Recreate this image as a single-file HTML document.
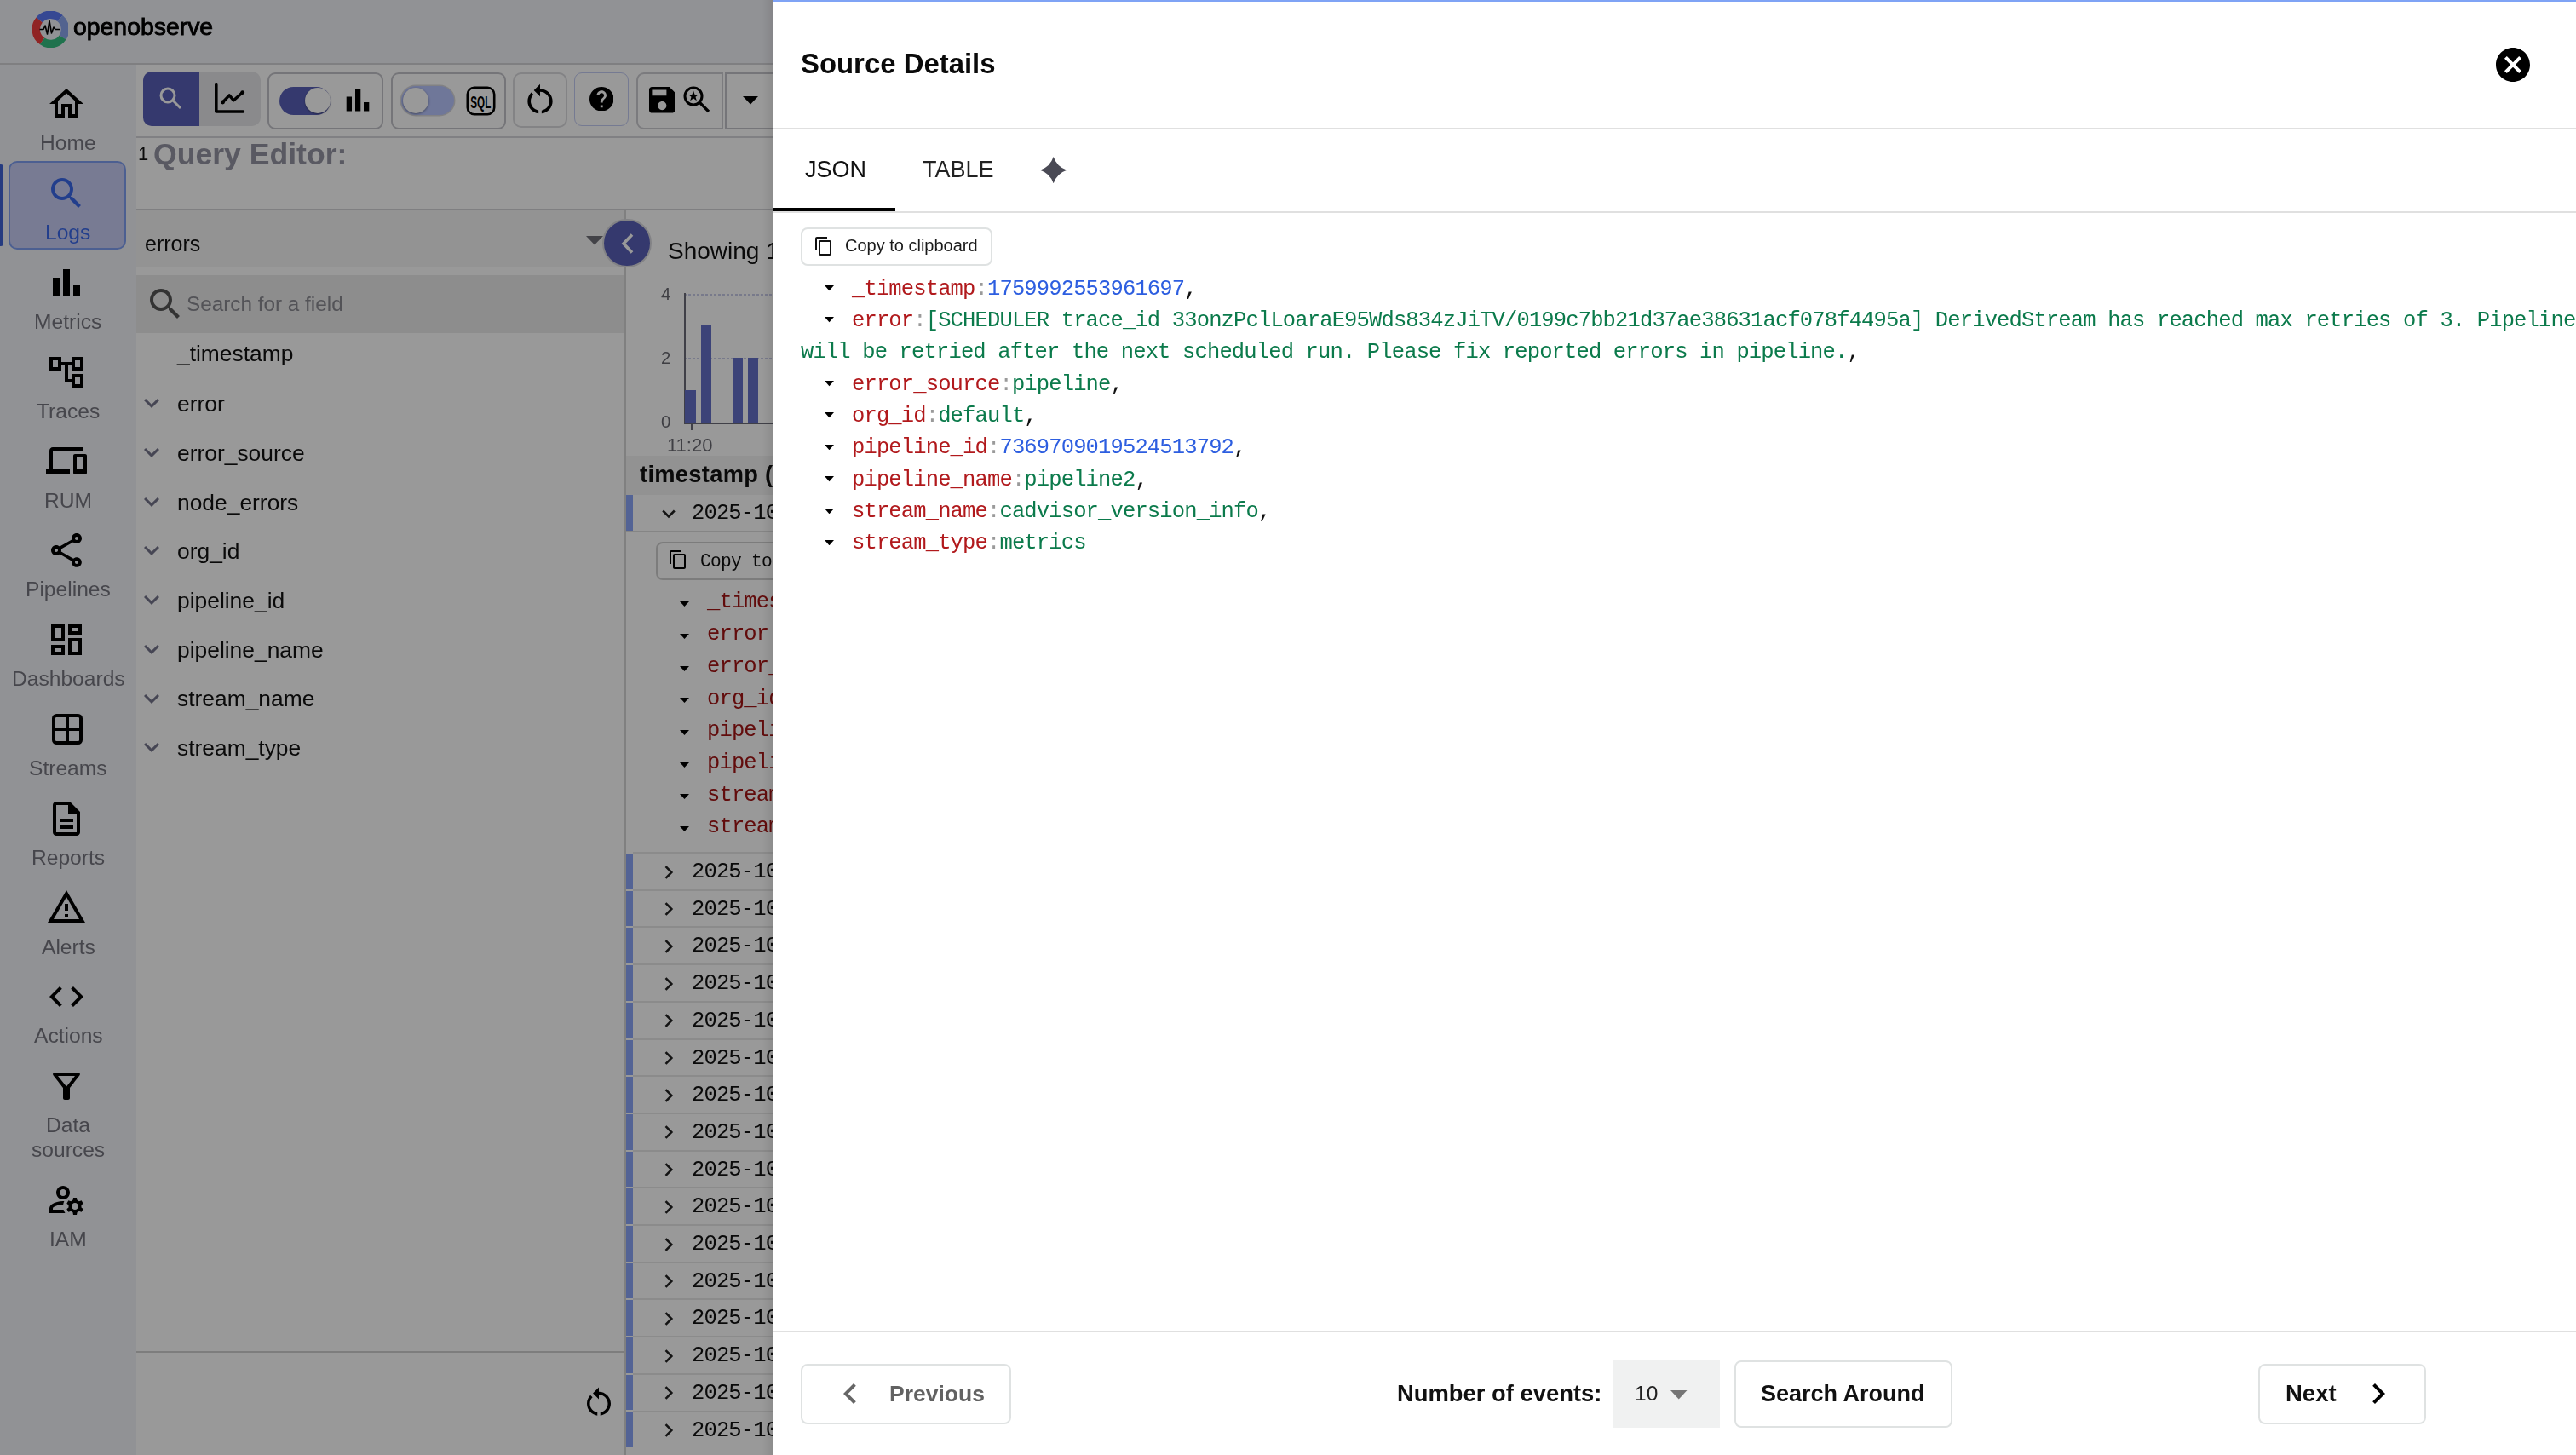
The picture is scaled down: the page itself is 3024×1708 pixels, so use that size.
<!DOCTYPE html>
<html><head><meta charset="utf-8"><title>Source Details</title>
<style>
html,body{margin:0;padding:0;}
body{width:3024px;height:1708px;overflow:hidden;position:relative;background:#fff;font-family:"Liberation Sans", sans-serif;}
.r{position:absolute;display:block;}
.t{position:absolute;white-space:pre;line-height:1;will-change:transform;}
.s{font-family:"Liberation Sans", sans-serif;}
.m{font-family:"Liberation Mono", monospace;}
</style></head><body>
<div class="r" style="left:0.0px;top:0.0px;width:907.0px;height:74.0px;background:#f2f3f8"></div>
<div class="r" style="left:0.0px;top:74.0px;width:907.0px;height:2.0px;background:#d4d4d8"></div>
<svg class="r" style="left:37px;top:12.5px" width="43" height="43" viewBox="0 0 43 43">
<g fill="none" stroke-width="9.5">
<path d="M 9.2 10.5 A 16.75 16.75 0 0 1 33.5 8.6" stroke="#5a78f5"/>
<path d="M 33.5 8.6 A 16.75 16.75 0 0 1 36.5 31" stroke="#8aa6ee"/>
<path d="M 36.5 31 A 16.75 16.75 0 0 1 12.5 35.2" stroke="#34bf80"/>
<path d="M 12.5 35.2 A 16.75 16.75 0 0 1 9.2 10.5" stroke="#f03c3c"/>
</g>
<polyline points="9.5,21.5 14,21.5 16,17 18.5,27 21,11.5 23.5,26 26,19 28,21.5 33.5,21.5" fill="none" stroke="#000" stroke-width="1.6" stroke-linejoin="round"/>
</svg>
<div class="t s" style="left:86.0px;top:16.7px;font-size:28.4px;color:#000;font-weight:400;-webkit-text-stroke:0.9px #000">openobserve</div>
<div class="r" style="left:0.0px;top:76.0px;width:160.0px;height:1632.0px;background:#f2f3f8"></div>
<div class="r" style="left:0.0px;top:193.0px;width:4.0px;height:96.0px;background:#3f63d6;border-radius:0 3px 3px 0"></div>
<div class="r" style="left:10.0px;top:189.0px;width:138.0px;height:104.0px;background:#c9cdf5;border:2px solid #7f9ff2;border-radius:10px;box-sizing:border-box"></div>
<svg class="r" style="left:54.3px;top:98.2px;" width="48" height="48" viewBox="0 0 24 24"><path fill="#000" d="M12 5.69l5 4.5V18h-2v-6H9v6H7v-7.81l5-4.5M12 3L2 12h3v8h6v-6h2v6h6v-8h3L12 3z"/></svg>
<div class="t s" style="left:47.2px;top:156.4px;font-size:24.6px;color:#76767f;font-weight:400;">Home</div>
<svg class="r" style="left:54.3px;top:203.0px;" width="48" height="48" viewBox="0 0 24 24"><path fill="#3a68ea" d="M15.5 14h-.79l-.28-.27C15.41 12.59 16 11.11 16 9.5 16 5.91 13.09 3 9.5 3S3 5.91 3 9.5 5.91 16 9.5 16c1.61 0 3.09-.59 4.23-1.57l.27.28v.79l5 4.99L20.49 19l-4.99-5zm-6 0C7.01 14 5 11.99 5 9.5S7.01 5 9.5 5 14 7.01 14 9.5 11.99 14 9.5 14z"/></svg>
<div class="t s" style="left:53.3px;top:261.2px;font-size:24.6px;color:#3a68ea;font-weight:400;">Logs</div>
<svg class="r" style="left:54.3px;top:307.8px;" width="48" height="48" viewBox="0 0 24 24"><path fill="#000" d="M4 9h4v11H4zm12 4h4v7h-4zm-6-9h4v16h-4z"/></svg>
<div class="t s" style="left:40.4px;top:366.0px;font-size:24.6px;color:#76767f;font-weight:400;">Metrics</div>
<svg class="r" style="left:54.3px;top:412.6px;" width="48" height="48" viewBox="0 0 24 24"><path fill="#000" d="M22 11V3h-7v3H9V3H2v8h7V8h2v10h4v3h7v-8h-7v3h-2V8h2v3h7zM7 9H4V5h3v4zm10 6h3v4h-3v-4zm0-10h3v4h-3V5z"/></svg>
<div class="t s" style="left:42.9px;top:470.8px;font-size:24.6px;color:#76767f;font-weight:400;">Traces</div>
<svg class="r" style="left:54.3px;top:517.4px;" width="48" height="48" viewBox="0 0 24 24"><path fill="#000" d="M4 6h18V4H4c-1.1 0-2 .9-2 2v11H0v3h14v-3H4V6zm19 2h-6c-.55 0-1 .45-1 1v10c0 .55.45 1 1 1h6c.55 0 1-.45 1-1V9c0-.55-.45-1-1-1zm-1 9h-4v-7h4v7z"/></svg>
<div class="t s" style="left:52.0px;top:575.6px;font-size:24.6px;color:#76767f;font-weight:400;">RUM</div>
<svg class="r" style="left:54.3px;top:622.2px;" width="48" height="48" viewBox="0 0 24 24"><path fill="#000" d="M18 16.08c-.76 0-1.44.3-1.96.77L8.91 12.7c.05-.23.09-.46.09-.7s-.04-.47-.09-.7l7.05-4.11c.54.5 1.25.81 2.04.81 1.66 0 3-1.34 3-3s-1.340-3-3-3-3 1.34-3 3c0 .24.04.47.09.7L8.04 9.81C7.5 9.31 6.79 9 6 9c-1.66 0-3 1.34-3 3s1.34 3 3 3c.79 0 1.5-.31 2.04-.81l7.12 4.16c-.05.21-.08.43-.08.65 0 1.61 1.31 2.92 2.92 2.92s2.92-1.31 2.92-2.92c0-1.61-1.31-2.92-2.92-2.92zM18 4c.55 0 1 .45 1 1s-.45 1-1 1-1-.45-1-1 .45-1 1-1zM6 13c-.55 0-1-.45-1-1s.45-1 1-1 1 .45 1 1-.45 1-1 1zm12 7.02c-.55 0-1-.45-1-1s.45-1 1-1 1 .45 1 1-.45 1-1 1z"/></svg>
<div class="t s" style="left:30.1px;top:680.4px;font-size:24.6px;color:#76767f;font-weight:400;">Pipelines</div>
<svg class="r" style="left:54.3px;top:727.0px;" width="48" height="48" viewBox="0 0 24 24"><path fill="#000" d="M19 5v2h-4V5h4M9 5v6H5V5h4m10 8v6h-4v-6h4M9 17v2H5v-2h4M21 3h-8v6h8V3zM11 3H3v10h8V3zm10 8h-8v10h8V11zm-10 4H3v6h8v-6z"/></svg>
<div class="t s" style="left:13.7px;top:785.2px;font-size:24.6px;color:#76767f;font-weight:400;">Dashboards</div>
<svg class="r" style="left:54.5px;top:831.8px;" width="48" height="48" viewBox="0 0 24 24"><rect x="4" y="4" width="16" height="16" rx="1.6" fill="none" stroke="#000" stroke-width="2"/><path d="M12 4v16M4 12h16" stroke="#000" stroke-width="2"/></svg>
<div class="t s" style="left:34.2px;top:890.0px;font-size:24.6px;color:#76767f;font-weight:400;">Streams</div>
<svg class="r" style="left:54.3px;top:936.6px;" width="48" height="48" viewBox="0 0 24 24"><path fill="#000" d="M8 16h8v2H8zm0-4h8v2H8zm6-10H6c-1.1 0-2 .9-2 2v16c0 1.1.89 2 1.99 2H18c1.1 0 2-.9 2-2V8l-6-6zm4 18H6V4h7v5h5v11z"/></svg>
<div class="t s" style="left:37.0px;top:994.8px;font-size:24.6px;color:#76767f;font-weight:400;">Reports</div>
<svg class="r" style="left:54.3px;top:1041.4px;" width="48" height="48" viewBox="0 0 24 24"><path fill="#000" d="M12 5.99L19.53 19H4.47L12 5.99M12 2L1 21h22L12 2zm1 14h-2v2h2v-2zm0-6h-2v4h2v-4z"/></svg>
<div class="t s" style="left:48.6px;top:1099.6px;font-size:24.6px;color:#76767f;font-weight:400;">Alerts</div>
<svg class="r" style="left:54.3px;top:1146.2px;" width="48" height="48" viewBox="0 0 24 24"><path fill="#000" d="M9.4 16.6L4.8 12l4.6-4.6L8 6l-6 6 6 6 1.4-1.4zm5.2 0l4.6-4.6-4.6-4.6L16 6l6 6-6 6-1.4-1.4z"/></svg>
<div class="t s" style="left:39.7px;top:1204.4px;font-size:24.6px;color:#76767f;font-weight:400;">Actions</div>
<svg class="r" style="left:54.3px;top:1251.0px;" width="48" height="48" viewBox="0 0 24 24"><path fill="#000" d="M7 6h10l-5.01 6.3L7 6zm-2.75-.39C6.27 8.2 10 13 10 13v6c0 .55.45 1 1 1h2c.55 0 1-.45 1-1v-6s3.72-4.8 5.74-7.39c.51-.66.04-1.61-.79-1.61H5.04c-.83 0-1.3.95-.79 1.61z"/></svg>
<div class="t s" style="left:54.0px;top:1309.2px;font-size:24.6px;color:#76767f;font-weight:400;">Data</div>
<div class="t s" style="left:37.0px;top:1338.4px;font-size:24.6px;color:#76767f;font-weight:400;">sources</div>
<svg class="r" style="left:54.3px;top:1384.4px;" width="48" height="48" viewBox="0 0 24 24"><path fill="#000" d="M4 18v-.65c0-.34.16-.66.41-.81C6.1 15.53 8.03 15 10 15c.03 0 .05 0 .08.01.1-.7.3-1.37.59-1.98-.22-.02-.44-.03-.67-.03-2.42 0-4.68.67-6.61 1.82-.88.52-1.39 1.5-1.39 2.53V20h9.26c-.42-.6-.75-1.28-.97-2H4zM10 12c2.21 0 4-1.79 4-4s-1.79-4-4-4-4 1.79-4 4 1.79 4 4 4zm0-6c1.1 0 2 .9 2 2s-.9 2-2 2-2-.9-2-2 .9-2 2-2zM20.75 16c0-.22-.03-.42-.06-.63l1.14-1.01-1-1.73-1.45.49c-.32-.27-.68-.48-1.08-.63L18 11h-2l-.3 1.49c-.4.15-.76.36-1.08.63l-1.450-.49-1 1.73 1.14 1.01c-.03.21-.06.41-.06.63s.03.42.06.63l-1.14 1.01 1 1.73 1.45-.49c.32.27.68.48 1.08.63L16 21h2l.3-1.49c.4-.15.76-.36 1.08-.63l1.45.49 1-1.73-1.14-1.01c.03-.21.06-.41.06-.63zM17 18c-1.1 0-2-.9-2-2s.9-2 2-2 2 .9 2 2-.9 2-2 2z"/></svg>
<div class="t s" style="left:58.1px;top:1442.6px;font-size:24.6px;color:#76767f;font-weight:400;">IAM</div>
<div class="r" style="left:168.0px;top:84.0px;width:138.0px;height:64.0px;background:#e7e7e9;border-radius:10px"></div>
<div class="r" style="left:168.0px;top:84.0px;width:66.0px;height:64.0px;background:#5960b7;border-radius:10px 0 0 10px"></div>
<svg class="r" style="left:183.0px;top:99.0px;" width="32" height="32" viewBox="0 0 32 32"><circle cx="14" cy="13" r="8" fill="none" stroke="#fff" stroke-width="3"/><path d="M19.8 18.8L29 28" stroke="#fff" stroke-width="3" stroke-linecap="butt"/></svg>
<svg class="r" style="left:250.0px;top:97.0px;" width="38" height="38" viewBox="0 0 38 38"><path d="M3.8 2.5V34h31.6" fill="none" stroke="#000" stroke-width="3.6" stroke-linecap="round" stroke-linejoin="round"/><polyline points="11.5,23 19.2,14.9 24.3,20.8 34.7,11.6" fill="none" stroke="#000" stroke-width="3.4" stroke-linecap="round" stroke-linejoin="round"/><circle cx="11.5" cy="23" r="2.4"/><circle cx="34.7" cy="11.6" r="2.4"/></svg>
<div class="r" style="left:314.0px;top:84.5px;width:135.5px;height:67.0px;border:2px solid #c4c4ca;border-radius:9px;box-sizing:border-box"></div>
<div class="r" style="left:327.5px;top:101.5px;width:60.5px;height:33.2px;background:#5960b7;border-radius:17px"></div>
<div class="r" style="left:357.5px;top:102.5px;width:30.0px;height:30.0px;background:#fff;border-radius:50%;box-shadow:0 1px 2px rgba(0,0,0,.35)"></div>
<svg class="r" style="left:406.0px;top:104.0px;" width="28" height="28" viewBox="0 0 28 28"><rect x="0.7" y="9.5" width="6.3" height="17" fill="#000"/><rect x="11" y="0.5" width="6.3" height="26" fill="#000"/><rect x="21" y="16" width="6.3" height="10.5" fill="#000"/></svg>
<div class="r" style="left:458.5px;top:84.5px;width:135.0px;height:67.0px;border:2px solid #c4c4ca;border-radius:9px;box-sizing:border-box"></div>
<div class="r" style="left:471.0px;top:101.0px;width:62.0px;height:33.8px;background:#b9c6ff;border-radius:17px;box-shadow:0 0 0 1.5px #d8d8dc"></div>
<div class="r" style="left:472.5px;top:102.5px;width:30.0px;height:30.0px;background:#fff;border-radius:50%;box-shadow:0 1px 3px rgba(0,0,0,.4)"></div>
<svg class="r" style="left:546.5px;top:100.5px;" width="35" height="35" viewBox="0 0 35 35"><rect x="1.8" y="1.8" width="31.4" height="31.4" rx="8" fill="none" stroke="#000" stroke-width="2.6"/><text x="5.3" y="25.8" textLength="24" lengthAdjust="spacingAndGlyphs" font-family="Liberation Sans" font-weight="700" font-size="20.5" fill="#000">SQL</text></svg>
<div class="r" style="left:602.0px;top:84.5px;width:63.5px;height:65.5px;border:2px solid #dadade;border-radius:10px;box-sizing:border-box"></div>
<svg class="r" style="left:612.0px;top:94.5px;" width="44" height="44" viewBox="0 0 24 24"><path fill="#000" d="M12 5V2L8 6l4 4V7c3.31 0 6 2.69 6 6 0 2.97-2.17 5.43-5 5.91v2.02c3.95-.49 7-3.85 7-7.93 0-4.42-3.58-8-8-8zm-6 8c0-1.65.67-3.15 1.76-4.24L6.34 7.34C4.9 8.79 4 10.79 4 13c0 4.08 3.050 7.44 7 7.93v-2.02c-2.83-.48-5-2.94-5-5.91z"/></svg>
<div class="r" style="left:674.0px;top:84.5px;width:63.5px;height:63.0px;border:1.5px solid #c3cbf3;border-radius:9px;box-sizing:border-box"></div>
<svg class="r" style="left:691.8px;top:101.5px;" width="28.5" height="28.5" viewBox="2 2 20 20"><path fill="#000" d="M12 2C6.48 2 2 6.48 2 12s4.48 10 10 10 10-4.48 10-10S17.52 2 12 2zm1 17h-2v-2h2v2zm2.07-7.75l-.9.92C13.45 12.9 13 13.5 13 15h-2v-.5c0-1.1.45-2.1 1.17-2.83l1.24-1.26c.37-.36.59-.86.59-1.410 0-1.1-.9-2-2-2s-2 .9-2 2H8c0-2.21 1.79-4 4-4s4 1.79 4 4c0 .88-.36 1.68-.93 2.25z"/></svg>
<div class="r" style="left:746.5px;top:84.5px;width:102.0px;height:67.0px;border:2px solid #cdcdd2;border-radius:9px 0 0 9px;box-sizing:border-box"></div>
<svg class="r" style="left:761.6px;top:102.0px;" width="30.6" height="30.6" viewBox="3 3 18 18"><path fill="#000" d="M17 3H5c-1.11 0-2 .9-2 2v14c0 1.1.89 2 2 2h14c1.1 0 2-.9 2-2V7l-4-4zm-5 16c-1.66 0-3-1.34-3-3s1.34-3 3-3 3 1.34 3 3-1.34 3-3 3zm3-10H5V5h10v4z"/></svg>
<svg class="r" style="left:801.0px;top:100.0px;" width="34" height="34" viewBox="0 0 34 34"><circle cx="13" cy="13" r="10" fill="none" stroke="#000" stroke-width="3"/><path d="M20.5 20.5L31 31" stroke="#000" stroke-width="3.2"/><polygon points="13,6.6 14.6,11 19,11 15.5,13.8 16.8,18.2 13,15.5 9.2,18.2 10.5,13.8 7,11 11.4,11" fill="#000"/></svg>
<div class="r" style="left:851.0px;top:84.5px;width:59.0px;height:67.0px;border:2px solid #c4c4ca;border-right:none;box-sizing:border-box"></div>
<svg class="r" style="left:872.0px;top:113.0px;" width="18" height="10" viewBox="0 0 18 10"><polygon points="0,0 18,0 9,9.5" fill="#000"/></svg>
<div class="r" style="left:160.0px;top:160.0px;width:747.0px;height:2.0px;background:#d6d6da"></div>
<div class="t s" style="left:161.5px;top:170.4px;font-size:22px;color:#111;font-weight:400;">1</div>
<div class="t s" style="left:180.0px;top:163.9px;font-size:35.6px;color:#9494a3;font-weight:700;">Query Editor:</div>
<div class="r" style="left:160.0px;top:245.0px;width:747.0px;height:2.0px;background:#d4d4d8"></div>
<div class="r" style="left:160.0px;top:247.0px;width:574.0px;height:67.0px;background:#f5f5f5"></div>
<div class="t s" style="left:170.0px;top:274.3px;font-size:25px;color:#111;font-weight:400;">errors</div>
<svg class="r" style="left:688.0px;top:277.0px;" width="20" height="11" viewBox="0 0 20 11"><polygon points="0,0 20,0 10,10.5" fill="#707078"/></svg>
<div class="r" style="left:160.0px;top:323.0px;width:574.0px;height:68.0px;background:#ececec"></div>
<svg class="r" style="left:170.0px;top:333.0px;" width="48" height="48" viewBox="0 0 24 24"><path fill="#555" d="M15.5 14h-.79l-.28-.27C15.41 12.59 16 11.11 16 9.5 16 5.91 13.09 3 9.5 3S3 5.91 3 9.5 5.91 16 9.5 16c1.61 0 3.09-.59 4.23-1.57l.27.28v.79l5 4.99L20.49 19l-4.99-5zm-6 0C7.01 14 5 11.99 5 9.5S7.01 5 9.5 5 14 7.01 14 9.5 11.99 14 9.5 14z"/></svg>
<div class="t s" style="left:218.5px;top:344.8px;font-size:24.3px;color:#8a8a92;font-weight:400;">Search for a field</div>
<div class="t s" style="left:208.3px;top:402.2px;font-size:26.4px;color:#111;font-weight:400;">_timestamp</div>
<svg class="r" style="left:160.0px;top:455.3px;" width="36" height="36" viewBox="0 0 24 24"><path fill="#76768c" d="M16.59 8.59L12 13.17 7.41 8.59 6 10l6 6 6-6z"/></svg>
<div class="t s" style="left:208.3px;top:461.2px;font-size:26.4px;color:#111;font-weight:400;">error</div>
<svg class="r" style="left:160.0px;top:513.0px;" width="36" height="36" viewBox="0 0 24 24"><path fill="#76768c" d="M16.59 8.59L12 13.17 7.41 8.59 6 10l6 6 6-6z"/></svg>
<div class="t s" style="left:208.3px;top:518.9px;font-size:26.4px;color:#111;font-weight:400;">error_source</div>
<svg class="r" style="left:160.0px;top:570.7px;" width="36" height="36" viewBox="0 0 24 24"><path fill="#76768c" d="M16.59 8.59L12 13.17 7.41 8.59 6 10l6 6 6-6z"/></svg>
<div class="t s" style="left:208.3px;top:576.6px;font-size:26.4px;color:#111;font-weight:400;">node_errors</div>
<svg class="r" style="left:160.0px;top:628.4px;" width="36" height="36" viewBox="0 0 24 24"><path fill="#76768c" d="M16.59 8.59L12 13.17 7.41 8.59 6 10l6 6 6-6z"/></svg>
<div class="t s" style="left:208.3px;top:634.3px;font-size:26.4px;color:#111;font-weight:400;">org_id</div>
<svg class="r" style="left:160.0px;top:686.1px;" width="36" height="36" viewBox="0 0 24 24"><path fill="#76768c" d="M16.59 8.59L12 13.17 7.41 8.59 6 10l6 6 6-6z"/></svg>
<div class="t s" style="left:208.3px;top:692.0px;font-size:26.4px;color:#111;font-weight:400;">pipeline_id</div>
<svg class="r" style="left:160.0px;top:743.8px;" width="36" height="36" viewBox="0 0 24 24"><path fill="#76768c" d="M16.59 8.59L12 13.17 7.41 8.59 6 10l6 6 6-6z"/></svg>
<div class="t s" style="left:208.3px;top:749.7px;font-size:26.4px;color:#111;font-weight:400;">pipeline_name</div>
<svg class="r" style="left:160.0px;top:801.5px;" width="36" height="36" viewBox="0 0 24 24"><path fill="#76768c" d="M16.59 8.59L12 13.17 7.41 8.59 6 10l6 6 6-6z"/></svg>
<div class="t s" style="left:208.3px;top:807.4px;font-size:26.4px;color:#111;font-weight:400;">stream_name</div>
<svg class="r" style="left:160.0px;top:859.2px;" width="36" height="36" viewBox="0 0 24 24"><path fill="#76768c" d="M16.59 8.59L12 13.17 7.41 8.59 6 10l6 6 6-6z"/></svg>
<div class="t s" style="left:208.3px;top:865.1px;font-size:26.4px;color:#111;font-weight:400;">stream_type</div>
<div class="r" style="left:733.3px;top:247.0px;width:1.5px;height:1461.0px;background:#d6d6d6"></div>
<div class="r" style="left:160.0px;top:1586.0px;width:573.0px;height:2.0px;background:#d0d0d0"></div>
<div class="r" style="left:707.0px;top:256.8px;width:57.6px;height:57.6px;background:#5960b7;border:2px solid #d9d9de;border-radius:50%;box-sizing:border-box"></div>
<svg class="r" style="left:726.0px;top:273.0px;" width="22" height="26" viewBox="0 0 22 26"><polyline points="16,2.5 6,13 16,23.5" fill="none" stroke="#fff" stroke-width="3.6"/></svg>
<svg class="r" style="left:681.5px;top:1624.5px;" width="42" height="42" viewBox="0 0 24 24"><path fill="#000" d="M12 5V2L8 6l4 4V7c3.31 0 6 2.69 6 6 0 2.97-2.17 5.43-5 5.91v2.02c3.95-.49 7-3.85 7-7.93 0-4.42-3.58-8-8-8zm-6 8c0-1.65.67-3.15 1.76-4.24L6.34 7.34C4.9 8.79 4 10.79 4 13c0 4.08 3.050 7.44 7 7.93v-2.02c-2.83-.48-5-2.94-5-5.91z"/></svg>
<div class="t s" style="left:783.5px;top:280.8px;font-size:28px;color:#111;font-weight:400;">Showing 1 to 50 out of 50</div>
<div class="t s" style="left:775.5px;top:334.8px;font-size:20.5px;color:#6a6a72;font-weight:400;">4</div>
<div class="t s" style="left:775.5px;top:410.0px;font-size:20.5px;color:#6a6a72;font-weight:400;">2</div>
<div class="t s" style="left:775.5px;top:484.8px;font-size:20.5px;color:#6a6a72;font-weight:400;">0</div>
<div class="r" style="left:803.0px;top:345.0px;width:104.0px;height:1.5px;background:repeating-linear-gradient(90deg,#c9cbe8 0 3px,transparent 3px 5px)"></div>
<div class="r" style="left:803.0px;top:419.5px;width:104.0px;height:1.5px;background:repeating-linear-gradient(90deg,#c9cbe8 0 3px,transparent 3px 5px)"></div>
<div class="r" style="left:802.5px;top:344.0px;width:2.0px;height:153.0px;background:#6c6c78"></div>
<div class="r" style="left:802.5px;top:495.5px;width:104.5px;height:2.0px;background:#6c6c78"></div>
<div class="r" style="left:811.0px;top:497.0px;width:2.0px;height:7.5px;background:#6c6c78"></div>
<div class="r" style="left:804.0px;top:457.5px;width:12.8px;height:38.5px;background:#6470c8"></div>
<div class="r" style="left:822.8px;top:382.3px;width:12.4px;height:113.7px;background:#6470c8"></div>
<div class="r" style="left:859.5px;top:420.0px;width:12.5px;height:76.0px;background:#6470c8"></div>
<div class="r" style="left:878.0px;top:420.0px;width:12.4px;height:76.0px;background:#6470c8"></div>
<div class="t s" style="left:783.0px;top:512.1px;font-size:22px;color:#6a6a72;font-weight:400;">11:20</div>
<div class="r" style="left:735.0px;top:535.0px;width:172.0px;height:46.0px;background:#f3f3f3"></div>
<div class="t s" style="left:751.0px;top:542.9px;font-size:27.3px;color:#111;font-weight:700;letter-spacing:0.3px">timestamp (Asia/Calcutta)</div>
<div class="r" style="left:735.0px;top:581.0px;width:8.0px;height:42.0px;background:#8aa6f8"></div>
<svg class="r" style="left:776.0px;top:594.0px;" width="18" height="18" viewBox="5 5 14 14"><path fill="#222" d="M16.59 8.59L12 13.17 7.41 8.59 6 10l6 6 6-6z"/></svg>
<div class="t m" style="left:811.5px;top:589.5px;font-size:25.5px;color:#111;font-weight:400;letter-spacing:-0.85px">2025-10-09T06:19:13.961+05:30</div>
<div class="r" style="left:735.0px;top:622.5px;width:172.0px;height:2.0px;background:#dedede"></div>
<div class="r" style="left:769.5px;top:636.0px;width:190.5px;height:44.5px;border:2px solid #cfcfcf;border-radius:8px;box-sizing:border-box"></div>
<svg class="r" style="left:784.0px;top:645.0px;" width="24" height="24" viewBox="0 0 24 24"><path fill="#000" d="M16 1H4c-1.1 0-2 .9-2 2v14h2V3h12V1zm3 4H8c-1.1 0-2 .9-2 2v14c0 1.1.9 2 2 2h11c1.1 0 2-.9 2-2V7c0-1.1-.9-2-2-2zm0 16H8V7h11v14z"/></svg>
<div class="t m" style="left:822.0px;top:648.7px;font-size:21.2px;color:#111;font-weight:400;letter-spacing:-0.72px">Copy to clipboard</div>
<svg class="r" style="left:797.5px;top:706.1px;" width="11" height="6" viewBox="0 0 11 6"><polygon points="0,0 11,0 5.5,6" fill="#000"/></svg>
<div class="t m" style="left:829.5px;top:694.4px;font-size:25.5px;color:#a31515;font-weight:400;letter-spacing:-0.85px">_timestamp:</div>
<svg class="r" style="left:797.5px;top:743.8px;" width="11" height="6" viewBox="0 0 11 6"><polygon points="0,0 11,0 5.5,6" fill="#000"/></svg>
<div class="t m" style="left:829.5px;top:732.1px;font-size:25.5px;color:#a31515;font-weight:400;letter-spacing:-0.85px">error:</div>
<svg class="r" style="left:797.5px;top:781.5px;" width="11" height="6" viewBox="0 0 11 6"><polygon points="0,0 11,0 5.5,6" fill="#000"/></svg>
<div class="t m" style="left:829.5px;top:769.8px;font-size:25.5px;color:#a31515;font-weight:400;letter-spacing:-0.85px">error_source:</div>
<svg class="r" style="left:797.5px;top:819.2px;" width="11" height="6" viewBox="0 0 11 6"><polygon points="0,0 11,0 5.5,6" fill="#000"/></svg>
<div class="t m" style="left:829.5px;top:807.5px;font-size:25.5px;color:#a31515;font-weight:400;letter-spacing:-0.85px">org_id:</div>
<svg class="r" style="left:797.5px;top:856.9px;" width="11" height="6" viewBox="0 0 11 6"><polygon points="0,0 11,0 5.5,6" fill="#000"/></svg>
<div class="t m" style="left:829.5px;top:845.2px;font-size:25.5px;color:#a31515;font-weight:400;letter-spacing:-0.85px">pipeline_id:</div>
<svg class="r" style="left:797.5px;top:894.6px;" width="11" height="6" viewBox="0 0 11 6"><polygon points="0,0 11,0 5.5,6" fill="#000"/></svg>
<div class="t m" style="left:829.5px;top:882.9px;font-size:25.5px;color:#a31515;font-weight:400;letter-spacing:-0.85px">pipeline_name:</div>
<svg class="r" style="left:797.5px;top:932.3px;" width="11" height="6" viewBox="0 0 11 6"><polygon points="0,0 11,0 5.5,6" fill="#000"/></svg>
<div class="t m" style="left:829.5px;top:920.6px;font-size:25.5px;color:#a31515;font-weight:400;letter-spacing:-0.85px">stream_name:</div>
<svg class="r" style="left:797.5px;top:970.0px;" width="11" height="6" viewBox="0 0 11 6"><polygon points="0,0 11,0 5.5,6" fill="#000"/></svg>
<div class="t m" style="left:829.5px;top:958.3px;font-size:25.5px;color:#a31515;font-weight:400;letter-spacing:-0.85px">stream_type:</div>
<div class="r" style="left:743.0px;top:1000.0px;width:164.0px;height:2.0px;background:#e8e8e8"></div>
<div class="r" style="left:735.0px;top:1002.0px;width:8.0px;height:41.7px;background:#8aa6f8"></div>
<svg class="r" style="left:776.0px;top:1014.5px;" width="18" height="18" viewBox="5 5 14 14"><path fill="#222" d="M10 6L8.59 7.41 13.17 12l-4.58 4.59L10 18l6-6z"/></svg>
<div class="t m" style="left:811.5px;top:1011.0px;font-size:25.5px;color:#111;font-weight:400;letter-spacing:-0.85px">2025-10-09T06:19:13.961+05:30</div>
<div class="r" style="left:743.0px;top:1043.7px;width:164.0px;height:2.0px;background:#e8e8e8"></div>
<div class="r" style="left:735.0px;top:1045.7px;width:8.0px;height:41.7px;background:#8aa6f8"></div>
<svg class="r" style="left:776.0px;top:1058.2px;" width="18" height="18" viewBox="5 5 14 14"><path fill="#222" d="M10 6L8.59 7.41 13.17 12l-4.58 4.59L10 18l6-6z"/></svg>
<div class="t m" style="left:811.5px;top:1054.7px;font-size:25.5px;color:#111;font-weight:400;letter-spacing:-0.85px">2025-10-09T06:19:13.961+05:30</div>
<div class="r" style="left:743.0px;top:1087.4px;width:164.0px;height:2.0px;background:#e8e8e8"></div>
<div class="r" style="left:735.0px;top:1089.4px;width:8.0px;height:41.7px;background:#8aa6f8"></div>
<svg class="r" style="left:776.0px;top:1101.9px;" width="18" height="18" viewBox="5 5 14 14"><path fill="#222" d="M10 6L8.59 7.41 13.17 12l-4.58 4.59L10 18l6-6z"/></svg>
<div class="t m" style="left:811.5px;top:1098.4px;font-size:25.5px;color:#111;font-weight:400;letter-spacing:-0.85px">2025-10-09T06:19:13.961+05:30</div>
<div class="r" style="left:743.0px;top:1131.1px;width:164.0px;height:2.0px;background:#e8e8e8"></div>
<div class="r" style="left:735.0px;top:1133.1px;width:8.0px;height:41.7px;background:#8aa6f8"></div>
<svg class="r" style="left:776.0px;top:1145.6px;" width="18" height="18" viewBox="5 5 14 14"><path fill="#222" d="M10 6L8.59 7.41 13.17 12l-4.58 4.59L10 18l6-6z"/></svg>
<div class="t m" style="left:811.5px;top:1142.1px;font-size:25.5px;color:#111;font-weight:400;letter-spacing:-0.85px">2025-10-09T06:19:13.961+05:30</div>
<div class="r" style="left:743.0px;top:1174.8px;width:164.0px;height:2.0px;background:#e8e8e8"></div>
<div class="r" style="left:735.0px;top:1176.8px;width:8.0px;height:41.7px;background:#8aa6f8"></div>
<svg class="r" style="left:776.0px;top:1189.3px;" width="18" height="18" viewBox="5 5 14 14"><path fill="#222" d="M10 6L8.59 7.41 13.17 12l-4.58 4.59L10 18l6-6z"/></svg>
<div class="t m" style="left:811.5px;top:1185.8px;font-size:25.5px;color:#111;font-weight:400;letter-spacing:-0.85px">2025-10-09T06:19:13.961+05:30</div>
<div class="r" style="left:743.0px;top:1218.5px;width:164.0px;height:2.0px;background:#e8e8e8"></div>
<div class="r" style="left:735.0px;top:1220.5px;width:8.0px;height:41.7px;background:#8aa6f8"></div>
<svg class="r" style="left:776.0px;top:1233.0px;" width="18" height="18" viewBox="5 5 14 14"><path fill="#222" d="M10 6L8.59 7.41 13.17 12l-4.58 4.59L10 18l6-6z"/></svg>
<div class="t m" style="left:811.5px;top:1229.5px;font-size:25.5px;color:#111;font-weight:400;letter-spacing:-0.85px">2025-10-09T06:19:13.961+05:30</div>
<div class="r" style="left:743.0px;top:1262.2px;width:164.0px;height:2.0px;background:#e8e8e8"></div>
<div class="r" style="left:735.0px;top:1264.2px;width:8.0px;height:41.7px;background:#8aa6f8"></div>
<svg class="r" style="left:776.0px;top:1276.7px;" width="18" height="18" viewBox="5 5 14 14"><path fill="#222" d="M10 6L8.59 7.41 13.17 12l-4.58 4.59L10 18l6-6z"/></svg>
<div class="t m" style="left:811.5px;top:1273.2px;font-size:25.5px;color:#111;font-weight:400;letter-spacing:-0.85px">2025-10-09T06:19:13.961+05:30</div>
<div class="r" style="left:743.0px;top:1305.9px;width:164.0px;height:2.0px;background:#e8e8e8"></div>
<div class="r" style="left:735.0px;top:1307.9px;width:8.0px;height:41.7px;background:#8aa6f8"></div>
<svg class="r" style="left:776.0px;top:1320.4px;" width="18" height="18" viewBox="5 5 14 14"><path fill="#222" d="M10 6L8.59 7.41 13.17 12l-4.58 4.59L10 18l6-6z"/></svg>
<div class="t m" style="left:811.5px;top:1316.9px;font-size:25.5px;color:#111;font-weight:400;letter-spacing:-0.85px">2025-10-09T06:19:13.961+05:30</div>
<div class="r" style="left:743.0px;top:1349.6px;width:164.0px;height:2.0px;background:#e8e8e8"></div>
<div class="r" style="left:735.0px;top:1351.6px;width:8.0px;height:41.7px;background:#8aa6f8"></div>
<svg class="r" style="left:776.0px;top:1364.1px;" width="18" height="18" viewBox="5 5 14 14"><path fill="#222" d="M10 6L8.59 7.41 13.17 12l-4.58 4.59L10 18l6-6z"/></svg>
<div class="t m" style="left:811.5px;top:1360.6px;font-size:25.5px;color:#111;font-weight:400;letter-spacing:-0.85px">2025-10-09T06:19:13.961+05:30</div>
<div class="r" style="left:743.0px;top:1393.3px;width:164.0px;height:2.0px;background:#e8e8e8"></div>
<div class="r" style="left:735.0px;top:1395.3px;width:8.0px;height:41.7px;background:#8aa6f8"></div>
<svg class="r" style="left:776.0px;top:1407.8px;" width="18" height="18" viewBox="5 5 14 14"><path fill="#222" d="M10 6L8.59 7.41 13.17 12l-4.58 4.59L10 18l6-6z"/></svg>
<div class="t m" style="left:811.5px;top:1404.3px;font-size:25.5px;color:#111;font-weight:400;letter-spacing:-0.85px">2025-10-09T06:19:13.961+05:30</div>
<div class="r" style="left:743.0px;top:1437.0px;width:164.0px;height:2.0px;background:#e8e8e8"></div>
<div class="r" style="left:735.0px;top:1439.0px;width:8.0px;height:41.7px;background:#8aa6f8"></div>
<svg class="r" style="left:776.0px;top:1451.5px;" width="18" height="18" viewBox="5 5 14 14"><path fill="#222" d="M10 6L8.59 7.41 13.17 12l-4.58 4.59L10 18l6-6z"/></svg>
<div class="t m" style="left:811.5px;top:1448.0px;font-size:25.5px;color:#111;font-weight:400;letter-spacing:-0.85px">2025-10-09T06:19:13.961+05:30</div>
<div class="r" style="left:743.0px;top:1480.7px;width:164.0px;height:2.0px;background:#e8e8e8"></div>
<div class="r" style="left:735.0px;top:1482.7px;width:8.0px;height:41.7px;background:#8aa6f8"></div>
<svg class="r" style="left:776.0px;top:1495.2px;" width="18" height="18" viewBox="5 5 14 14"><path fill="#222" d="M10 6L8.59 7.41 13.17 12l-4.58 4.59L10 18l6-6z"/></svg>
<div class="t m" style="left:811.5px;top:1491.7px;font-size:25.5px;color:#111;font-weight:400;letter-spacing:-0.85px">2025-10-09T06:19:13.961+05:30</div>
<div class="r" style="left:743.0px;top:1524.4px;width:164.0px;height:2.0px;background:#e8e8e8"></div>
<div class="r" style="left:735.0px;top:1526.4px;width:8.0px;height:41.7px;background:#8aa6f8"></div>
<svg class="r" style="left:776.0px;top:1538.9px;" width="18" height="18" viewBox="5 5 14 14"><path fill="#222" d="M10 6L8.59 7.41 13.17 12l-4.58 4.59L10 18l6-6z"/></svg>
<div class="t m" style="left:811.5px;top:1535.4px;font-size:25.5px;color:#111;font-weight:400;letter-spacing:-0.85px">2025-10-09T06:19:13.961+05:30</div>
<div class="r" style="left:743.0px;top:1568.1px;width:164.0px;height:2.0px;background:#e8e8e8"></div>
<div class="r" style="left:735.0px;top:1570.1px;width:8.0px;height:41.7px;background:#8aa6f8"></div>
<svg class="r" style="left:776.0px;top:1582.6px;" width="18" height="18" viewBox="5 5 14 14"><path fill="#222" d="M10 6L8.59 7.41 13.17 12l-4.58 4.59L10 18l6-6z"/></svg>
<div class="t m" style="left:811.5px;top:1579.1px;font-size:25.5px;color:#111;font-weight:400;letter-spacing:-0.85px">2025-10-09T06:19:13.961+05:30</div>
<div class="r" style="left:743.0px;top:1611.8px;width:164.0px;height:2.0px;background:#e8e8e8"></div>
<div class="r" style="left:735.0px;top:1613.8px;width:8.0px;height:41.7px;background:#8aa6f8"></div>
<svg class="r" style="left:776.0px;top:1626.3px;" width="18" height="18" viewBox="5 5 14 14"><path fill="#222" d="M10 6L8.59 7.41 13.17 12l-4.58 4.59L10 18l6-6z"/></svg>
<div class="t m" style="left:811.5px;top:1622.8px;font-size:25.5px;color:#111;font-weight:400;letter-spacing:-0.85px">2025-10-09T06:19:13.961+05:30</div>
<div class="r" style="left:743.0px;top:1655.5px;width:164.0px;height:2.0px;background:#e8e8e8"></div>
<div class="r" style="left:735.0px;top:1657.5px;width:8.0px;height:41.7px;background:#8aa6f8"></div>
<svg class="r" style="left:776.0px;top:1670.0px;" width="18" height="18" viewBox="5 5 14 14"><path fill="#222" d="M10 6L8.59 7.41 13.17 12l-4.58 4.59L10 18l6-6z"/></svg>
<div class="t m" style="left:811.5px;top:1666.5px;font-size:25.5px;color:#111;font-weight:400;letter-spacing:-0.85px">2025-10-09T06:19:13.961+05:30</div>
<div class="r" style="left:0.0px;top:0.0px;width:907.0px;height:1708.0px;background:rgba(0,0,0,0.4)"></div>
<div class="r" style="left:895.0px;top:0.0px;width:12.0px;height:1708.0px;background:linear-gradient(90deg,rgba(0,0,0,0),rgba(0,0,0,0.08))"></div>
<div class="r" style="left:907.0px;top:0.0px;width:2117.0px;height:1708.0px;background:#fff"></div>
<div class="r" style="left:907.0px;top:0.0px;width:2117.0px;height:2.0px;background:#7fa3f5"></div>
<div class="t s" style="left:940.0px;top:59.2px;font-size:32.9px;color:#0a0a0a;font-weight:700;">Source Details</div>
<svg class="r" style="left:2926.0px;top:52.0px;" width="48" height="48" viewBox="0 0 24 24"><path fill="#000" d="M12 2C6.47 2 2 6.47 2 12s4.47 10 10 10 10-4.47 10-10S17.53 2 12 2zm5 13.59L15.59 17 12 13.41 8.41 17 7 15.590 10.59 12 7 8.41 8.41 7 12 10.59 15.59 7 17 8.41 13.41 12 17 15.59z"/></svg>
<div class="r" style="left:907.0px;top:150.0px;width:2117.0px;height:2.0px;background:#e0e0e0"></div>
<div class="t s" style="left:944.6px;top:186.0px;font-size:27px;color:#111;font-weight:400;">JSON</div>
<div class="t s" style="left:1083.0px;top:186.0px;font-size:27px;color:#222;font-weight:400;">TABLE</div>
<svg class="r" style="left:1221.2px;top:184.0px;" width="31.4" height="31.4" viewBox="0 0 31 31"><path d="M15.5 0 Q19.3 11.7 31 15.5 Q19.3 19.3 15.5 31 Q11.7 19.3 0 15.5 Q11.7 11.7 15.5 0Z" fill="#4a4a55"/></svg>
<div class="r" style="left:907.0px;top:247.5px;width:2117.0px;height:2.0px;background:#e0e0e0"></div>
<div class="r" style="left:907.0px;top:243.5px;width:144.0px;height:4.5px;background:#000"></div>
<div class="r" style="left:939.5px;top:266.5px;width:225.0px;height:45.0px;border:2px solid #dfe2e2;border-radius:8px;box-sizing:border-box"></div>
<svg class="r" style="left:954.5px;top:277.0px;" width="24" height="24" viewBox="0 0 24 24"><path fill="#111" d="M16 1H4c-1.1 0-2 .9-2 2v14h2V3h12V1zm3 4H8c-1.1 0-2 .9-2 2v14c0 1.1.9 2 2 2h11c1.1 0 2-.9 2-2V7c0-1.1-.9-2-2-2zm0 16H8V7h11v14z"/></svg>
<div class="t s" style="left:992.0px;top:278.2px;font-size:20px;color:#1a1a1a;font-weight:400;">Copy to clipboard</div>
<svg class="r" style="left:968.0px;top:335.0px;" width="11" height="6.5" viewBox="0 0 11 6.5"><polygon points="0,0 11,0 5.5,6.3" fill="#000"/></svg>
<div class="t m" style="left:999.5px;top:326.5px;font-size:25.5px;letter-spacing:-0.85px;color:#b1191c">_timestamp<span style="color:#9a9a9a">:</span><span style="color:#2d5ee0">1759992553961697</span><span style="color:#111">,</span></div>
<svg class="r" style="left:968.0px;top:372.4px;" width="11" height="6.5" viewBox="0 0 11 6.5"><polygon points="0,0 11,0 5.5,6.3" fill="#000"/></svg>
<div class="t m" style="left:999.5px;top:363.8px;font-size:25.5px;letter-spacing:-0.85px;color:#b1191c">error<span style="color:#9a9a9a">:</span><span style="color:#0b7a4b">[SCHEDULER trace_id 33onzPclLoaraE95Wds834zJiTV/0199c7bb21d37ae38631acf078f4495a] DerivedStream has reached max retries of 3. Pipeline</span></div>
<div class="t m" style="left:939.5px;top:401.2px;font-size:25.5px;letter-spacing:-0.85px;color:#0b7a4b">will be retried after the next scheduled run. Please fix reported errors in pipeline.<span style="color:#111">,</span></div>
<svg class="r" style="left:968.0px;top:447.1px;" width="11" height="6.5" viewBox="0 0 11 6.5"><polygon points="0,0 11,0 5.5,6.3" fill="#000"/></svg>
<div class="t m" style="left:999.5px;top:438.5px;font-size:25.5px;letter-spacing:-0.85px;color:#b1191c">error_source<span style="color:#9a9a9a">:</span><span style="color:#0b7a4b">pipeline</span><span style="color:#111">,</span></div>
<svg class="r" style="left:968.0px;top:484.4px;" width="11" height="6.5" viewBox="0 0 11 6.5"><polygon points="0,0 11,0 5.5,6.3" fill="#000"/></svg>
<div class="t m" style="left:999.5px;top:475.9px;font-size:25.5px;letter-spacing:-0.85px;color:#b1191c">org_id<span style="color:#9a9a9a">:</span><span style="color:#0b7a4b">default</span><span style="color:#111">,</span></div>
<svg class="r" style="left:968.0px;top:521.8px;" width="11" height="6.5" viewBox="0 0 11 6.5"><polygon points="0,0 11,0 5.5,6.3" fill="#000"/></svg>
<div class="t m" style="left:999.5px;top:513.2px;font-size:25.5px;letter-spacing:-0.85px;color:#b1191c">pipeline_id<span style="color:#9a9a9a">:</span><span style="color:#2d5ee0">7369709019524513792</span><span style="color:#111">,</span></div>
<svg class="r" style="left:968.0px;top:559.1px;" width="11" height="6.5" viewBox="0 0 11 6.5"><polygon points="0,0 11,0 5.5,6.3" fill="#000"/></svg>
<div class="t m" style="left:999.5px;top:550.6px;font-size:25.5px;letter-spacing:-0.85px;color:#b1191c">pipeline_name<span style="color:#9a9a9a">:</span><span style="color:#0b7a4b">pipeline2</span><span style="color:#111">,</span></div>
<svg class="r" style="left:968.0px;top:596.5px;" width="11" height="6.5" viewBox="0 0 11 6.5"><polygon points="0,0 11,0 5.5,6.3" fill="#000"/></svg>
<div class="t m" style="left:999.5px;top:587.9px;font-size:25.5px;letter-spacing:-0.85px;color:#b1191c">stream_name<span style="color:#9a9a9a">:</span><span style="color:#0b7a4b">cadvisor_version_info</span><span style="color:#111">,</span></div>
<svg class="r" style="left:968.0px;top:633.8px;" width="11" height="6.5" viewBox="0 0 11 6.5"><polygon points="0,0 11,0 5.5,6.3" fill="#000"/></svg>
<div class="t m" style="left:999.5px;top:625.3px;font-size:25.5px;letter-spacing:-0.85px;color:#b1191c">stream_type<span style="color:#9a9a9a">:</span><span style="color:#0b7a4b">metrics</span></div>
<div class="r" style="left:907.0px;top:1562.0px;width:2117.0px;height:2.0px;background:#e0e0e0"></div>
<div class="r" style="left:939.5px;top:1600.5px;width:247.0px;height:71.0px;border:2px solid #dfe2e2;border-radius:8px;box-sizing:border-box"></div>
<svg class="r" style="left:974.0px;top:1612.0px;" width="48" height="48" viewBox="0 0 24 24"><path fill="#666" d="M15.41 7.41L14 6l-6 6 6 6 1.41-1.41L10.83 12z"/></svg>
<div class="t s" style="left:1044.4px;top:1623.2px;font-size:26.5px;color:#626262;font-weight:700;">Previous</div>
<div class="t s" style="left:1640.0px;top:1622.2px;font-size:27.4px;color:#111;font-weight:700;">Number of events:</div>
<div class="r" style="left:1894.0px;top:1596.5px;width:125.0px;height:79.0px;background:#f0f1f1"></div>
<div class="t s" style="left:1919.3px;top:1623.9px;font-size:24.5px;color:#222;font-weight:400;">10</div>
<svg class="r" style="left:1961.0px;top:1632.0px;" width="19.5" height="10.5" viewBox="0 0 19.5 10.5"><polygon points="0,0 19.5,0 9.75,10.5" fill="#757575"/></svg>
<div class="r" style="left:2035.5px;top:1596.5px;width:256.0px;height:79.0px;border:2px solid #dfe2e2;border-radius:8px;box-sizing:border-box"></div>
<div class="t s" style="left:2067.4px;top:1622.5px;font-size:27px;color:#111;font-weight:700;">Search Around</div>
<div class="r" style="left:2650.5px;top:1600.5px;width:197.0px;height:71.0px;border:2px solid #dfe2e2;border-radius:8px;box-sizing:border-box"></div>
<div class="t s" style="left:2683.0px;top:1621.7px;font-size:27.5px;color:#111;font-weight:700;">Next</div>
<svg class="r" style="left:2768.0px;top:1612.0px;" width="48" height="48" viewBox="0 0 24 24"><path fill="#000" d="M10 6L8.59 7.41 13.17 12l-4.58 4.59L10 18l6-6z"/></svg>
</body></html>
